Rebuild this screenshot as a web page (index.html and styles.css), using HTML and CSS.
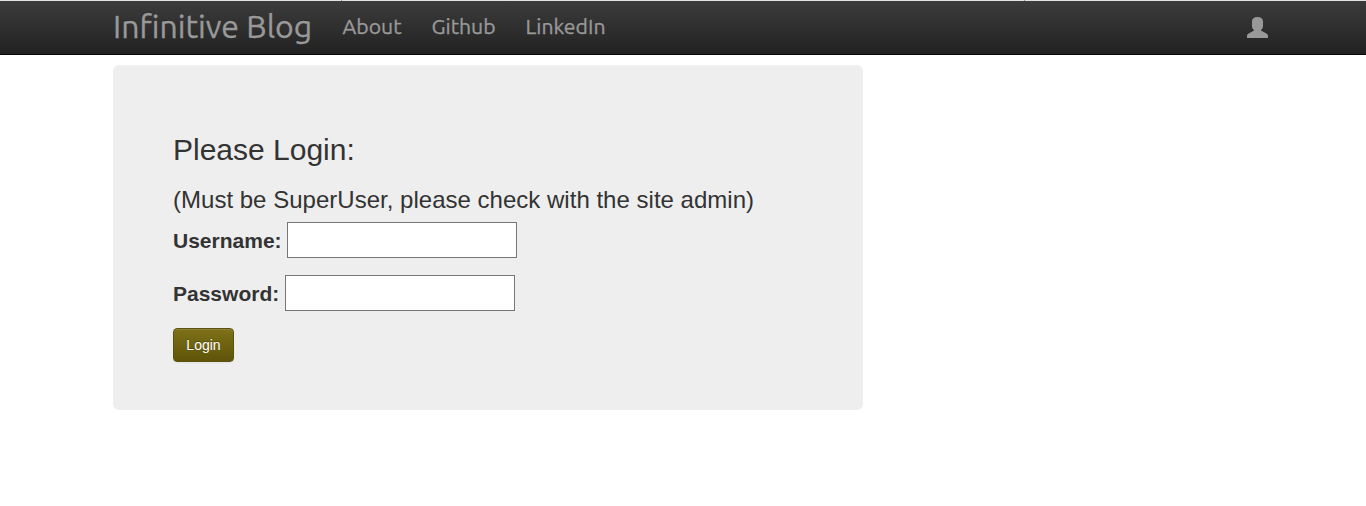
FILE: index.html
```html
<!DOCTYPE html>
<html lang="en">
<head>
<meta charset="utf-8">
<title>Infinitive Blog</title>
<link rel="stylesheet" href="styles.css">
</head>
<body>
<header class="navbar">
  <div class="navbar-inner">
    <a class="brand">Infinitive Blog</a>
    <nav class="nav">
      <a class="about">About</a>
      <a class="github">Github</a>
      <a class="linkedin">LinkedIn</a>
    </nav>
    <a class="user" aria-label="Login">
      <svg width="21" height="21" viewBox="0 0 21 21"><path d="M10.500 0C14 0 16 1.600 16 4.500V9C16 10.800 15.300 12 14 13V13.600C15.500 14.800 18.500 15.700 20 17C20.700 17.500 21 18 21 19V21H0V19C0 18 .3 17.500 1 17C2.500 15.700 5.500 14.800 7 13.600V13C5.700 12 5 10.800 5 9V4.500C5 1.600 7 0 10.500 0Z"/></svg>
    </a>
  </div>
</header>
<main class="container">
  <form class="hero">
    <h1 class="title">Please Login:</h1>
    <h2 class="subtitle">(Must be SuperUser, please check with the site admin)</h2>
    <div class="field"><label for="username">Username:</label><input id="username" type="text"></div>
    <div class="field"><label for="password">Password:</label><input id="password" type="password"></div>
    <button class="btn" type="button">Login</button>
  </form>
</main>
</body>
</html>
```
FILE: styles.css
```css
* { box-sizing: border-box; }
body {
  margin: 0;
  background: #fff;
  color: #333;
  font-family: "Liberation Sans", Arial, sans-serif;
}
.navbar {
  height: 55px;
  padding-top: 1px;
  border-bottom: 1px solid #080808;
  background:
    linear-gradient(#999, #999) 341px 0 / 1px 1px no-repeat,
    linear-gradient(#999, #999) 1024px 0 / 1px 1px no-repeat,
    linear-gradient(#dfe3e2, #dfe3e2) 0 0 / 100% 1px no-repeat,
    linear-gradient(#3c3c3c, #222);
}
.navbar-inner {
  display: flex;
  align-items: flex-start;
  width: 1155px;
  height: 53px;
  margin-left: 113px;
  color: #999;
  font-family: Ubuntu, "Noto Sans", sans-serif;
  font-weight: 400;
  -webkit-text-stroke: .35px #999;
  text-shadow: 0 -1px 0 rgba(0, 0, 0, .25);
}
.brand {
  width: 229.500px;
  padding-top: 5px;
  font-size: 32px;
  line-height: 40px;
  white-space: nowrap;
}
.nav {
  display: flex;
  padding-top: 5px;
  font-size: 21.200px;
  line-height: 40px;
}
.about { width: 89px; }
.github { width: 94px; }
.user { margin: 16px 0 0 auto; line-height: 0; }
.user svg { fill: #999; }
.container { width: 750px; margin: 10px 0 0 113px; }
.hero {
  height: 345px;
  padding: 60px;
  border-radius: 6px;
  background: #eee;
}
.title { margin: 5px 0 0; font-size: 30px; font-weight: 400; line-height: 40px; }
.subtitle { margin: 10px 0 2px; font-size: 24px; font-weight: 400; line-height: 40px; letter-spacing: .015px; white-space: nowrap; }
.field { display: flex; align-items: center; gap: 5.500px; height: 36px; margin-bottom: 17px; }
.field label { padding-top: 2px; font-size: 21px; font-weight: 700; line-height: 30px; }
.field input {
  width: 230px;
  height: 36px;
  padding: 4px 6px;
  border: 1px solid #767676;
  border-radius: 0;
  background: #fff;
  font-size: 21px;
}
.btn {
  display: block;
  width: 61px;
  height: 34px;
  padding: 0;
  border: 1px solid #5c520f;
  border-radius: 4px;
  background: linear-gradient(#7e7118, #5f5309);
  box-shadow: inset 0 1px 0 rgba(255, 255, 255, .12), 0 1px 2px rgba(0, 0, 0, .05);
  color: #fff;
  font: 14px/20px "Liberation Sans", Arial, sans-serif;
  text-shadow: 0 -1px 0 rgba(0, 0, 0, .25);
}
```
